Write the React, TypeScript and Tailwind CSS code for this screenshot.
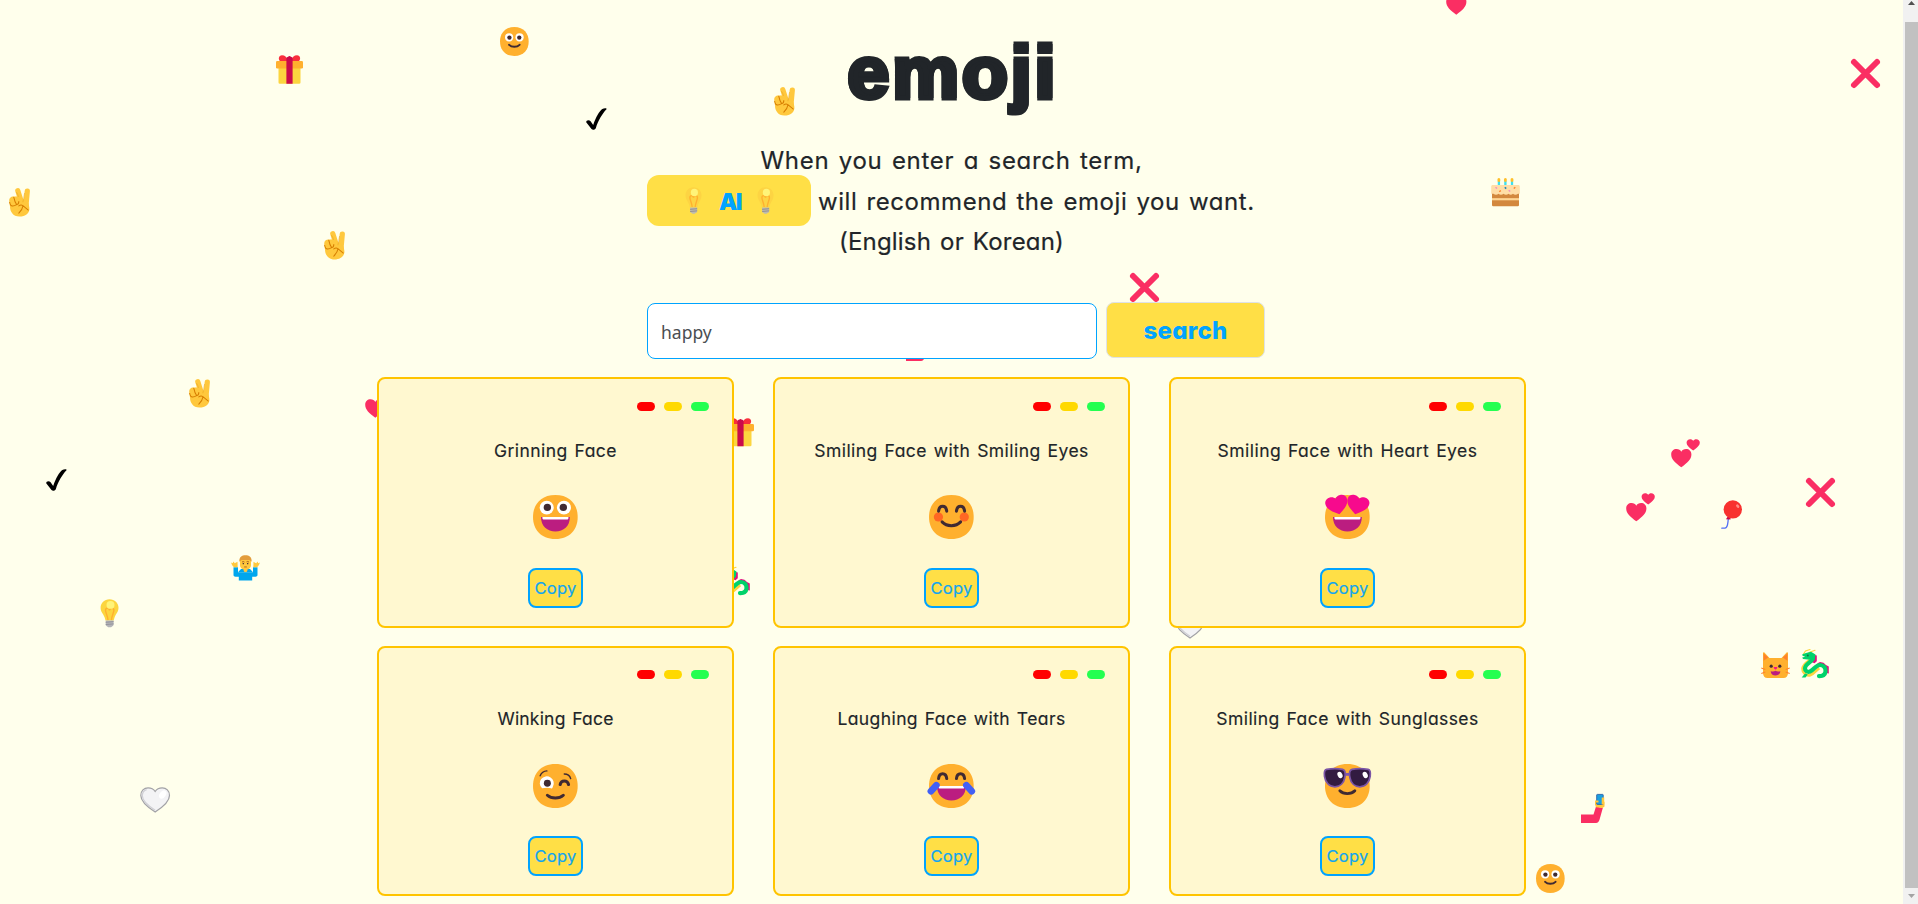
import { type ReactNode } from "react";

const INK = "#402A32";

function FaceBase() {
  return (
    <path
      d="M16 30C25.3 30 30 23.7 30 16S25.3 2 16 2 2 8.3 2 16s4.700 14 14 14Z"
      fill="#FFB02E"
    />
  );
}

function OpenMouth() {
  return (
    <>
      <path d="M7 16h18.100c0 6-4 9.200-9.050 9.200S7 22 7 16Z" fill="#BB1D80" />
      <path d="M7.900 16h16.300v.6c0 .6-.4 1-1 1H8.900c-.6 0-1-.4-1-1Z" fill="#fff" />
    </>
  );
}

function HappyEyes({ y }: { y: number }) {
  return (
    <path
      d={`M8 ${y}c.4-4.200 4.700-4.200 5.100 0M19.200 ${y}c.4-4.200 4.700-4.200 5.100 0`}
      fill="none"
      stroke={INK}
      strokeWidth="1.900"
      strokeLinecap="round"
    />
  );
}

const HEART = "M10 18.500C4 14 0 10.500 0 5.500 0 2 2.400 0 5.300 0 7.400 0 9.200 1 10 2.600 10.800 1 12.600 0 14.700 0 17.600 0 20 2 20 5.500c0 5-4 8.500-10 13Z";

const ART: Record<string, { box: string; art: ReactNode }> = {
  grinning: {
    box: "2 2 28 28",
    art: (
      <>
        <FaceBase />
        <circle cx="10.600" cy="10" r="4.400" fill="#fff" />
        <circle cx="21.400" cy="10" r="4.400" fill="#fff" />
        <circle cx="11" cy="9.900" r="2.300" fill={INK} />
        <circle cx="21" cy="9.900" r="2.300" fill={INK} />
        <OpenMouth />
      </>
    ),
  },
  smiling: {
    box: "2 2 28 28",
    art: (
      <>
        <FaceBase />
        <circle cx="7.900" cy="16" r="2.900" fill="#FF6723" />
        <circle cx="24.100" cy="16" r="2.900" fill="#FF6723" />
        <HappyEyes y={12.3} />
        <path d="M10.200 19.100c3 3.200 8.600 3.200 11.600 0" fill="none" stroke={INK} strokeWidth="1.900" strokeLinecap="round" />
      </>
    ),
  },
  heartEyes: {
    box: "2 2 28 28",
    art: (
      <>
        <FaceBase />
        <g fill="#F70A8D">
          <path d={HEART} transform="translate(1.400 4.500) rotate(-14) scale(.7 .64)" />
          <path d={HEART} transform="translate(17 1.100) rotate(14) scale(.7 .64)" />
        </g>
        <OpenMouth />
      </>
    ),
  },
  winking: {
    box: "2 2 28 28",
    art: (
      <>
        <FaceBase />
        <path d="M7.700 17.500a4.400 4.400 0 1 1 6.800-1.200c-.2.900-.8 1.600-1.100 1.200-1.500-.6-3.800-.5-5.700 0Z" fill="#fff" />
        <circle cx="11" cy="14.200" r="2.200" fill={INK} />
        <g fill="none" stroke={INK} strokeLinecap="round">
          <path d="M6.500 9.500c.7-1.700 2.200-3 4.200-3.100M21.600 8.400c1.900 0 3.500 1.200 4 2.900" strokeWidth=".9" />
          <path d="M19 15.100c.6-3 4.600-3 5.300 0" strokeWidth="1.900" />
          <path d="M11 21.900c2.600 2.400 7.400 2.400 10 0" strokeWidth="1.900" />
        </g>
      </>
    ),
  },
  laughing: {
    box: "2 2 28 28",
    art: (
      <>
        <FaceBase />
        <HappyEyes y={11.3} />
        <OpenMouth />
        <path d="M6.600 15.500 3.200 19.300M25.400 15.500l3.400 3.800" stroke="#4260F5" strokeWidth="4.200" strokeLinecap="round" />
      </>
    ),
  },
  sunglasses: {
    box: "2 2 28 28",
    art: (
      <>
        <FaceBase />
        <path d="M13.600 8.600h4.800" stroke="#8157AE" strokeWidth="1.800" />
        <g fill="#321B41" stroke="#7B55A5" strokeWidth="1.100">
          <path d="M3 5.400c3-.5 7.500-.5 10 0 1.700.4 1.900 2.600 1.400 5.200-.6 3.500-3 5.900-6.200 5.900-3.600 0-6-2.900-6.500-6.600-.3-2.200-.4-4.100 1.300-4.500Z" />
          <path d="M29 5.400c-3-.5-7.500-.5-10 0-1.700.4-1.900 2.600-1.400 5.200.6 3.500 3 5.900 6.200 5.900 3.600 0 6-2.900 6.500-6.600.3-2.200.4-4.100-1.300-4.500Z" />
        </g>
        <g fill="#fff">
          <ellipse cx="11.400" cy="9" rx="1.500" ry="2.100" transform="rotate(-25 11.400 9)" />
          <ellipse cx="27.200" cy="9" rx="1.500" ry="2.100" transform="rotate(-25 27.200 9)" />
        </g>
        <path d="M11.300 19c2.300 2.400 7.100 2.400 9.400 0" fill="none" stroke={INK} strokeWidth="1.800" strokeLinecap="round" />
      </>
    ),
  },
  face: {
    box: "2 2 28 28",
    art: (
      <>
        <FaceBase />
        <circle cx="10.900" cy="12" r="4" fill="#fff" />
        <circle cx="21.100" cy="12" r="4" fill="#fff" />
        <circle cx="11.200" cy="12.200" r="2.100" fill={INK} />
        <circle cx="20.800" cy="12.200" r="2.100" fill={INK} />
        <path d="M10.900 19.200c2.500 2.600 7.700 2.600 10.200 0" fill="none" stroke={INK} strokeWidth="1.900" strokeLinecap="round" />
      </>
    ),
  },
  gift: {
    box: "0 0 27 29",
    art: (
      <>
        <path d="M11 6.500H4.500C1.800 5 2.500.3 6 .3c3 0 4.500 2 5.500 4ZM16 6.500h6.500c2.700-1.500 2-6.200-1.500-6.200-3 0-4.500 2-5.500 4Z" fill="#F92F3C" />
        <path d="M2.500 12h22v15.500a1.300 1.300 0 0 1-1.300 1.300H3.800a1.300 1.300 0 0 1-1.300-1.300Z" fill="#FCD53F" />
        <rect y="6" width="27" height="7.500" rx="1.300" fill="#FFB02E" />
        <path d="M10.400 3.500c0-1 1-1.700 1.700-1.700.8-1 2-1 2.800 0 .8 0 1.700.7 1.700 1.700v25.300h-6.200Z" fill="#CA0B4A" />
      </>
    ),
  },
  check: {
    box: "0 0 21 22",
    art: (
      <path d="M.2 14.300C0 12 3.200 11.300 4.600 13.300L7.200 17C10 9 13 3.500 16.300 1 18-.2 21.300-.2 20.500 1.300 16 6 12 13 9.900 20c-.7 2-3.400 2.300-4.400 1Z" fill="#000" />
    ),
  },
  hand: {
    box: "0 0 62 84",
    art: (
      <>
        <path d="M26 8 35 36M54 9 50 52" stroke="#FFC83D" strokeWidth="15.500" strokeLinecap="round" />
        <path d="M1 40C-1 30 6 24 15 25l16-1 27 22 2 12c2 16-12 26-29 26C11 84 3 68 3 55Z" fill="#FFC83D" />
        <g fill="none" stroke="#D67D00" strokeWidth="3" strokeLinecap="round">
          <path d="M14 27q3 14 8 21M2 42q2 12 9 11 6 0 11-4 7 0 7-9" />
          <path d="M29 53q6-5 12-1l16 13M41 53q-1 10-12 21" />
        </g>
        <path d="M22 12q5 8 6 14M46 15l-5 27" fill="none" stroke="#E39D1A" strokeWidth="1.500" />
      </>
    ),
  },
  hearts: {
    box: "0 0 29 29",
    art: (
      <g fill="#FA2E63">
        <path d={HEART} transform="translate(.2 10.300) scale(1.010 1)" />
        <path d={HEART} transform="translate(15.600 .2) scale(.66 .62)" />
      </g>
    ),
  },
  cross: {
    box: "0 0 29 29",
    art: <path d="m3 3 23 23M26 3 3 26" stroke="#FA2E63" strokeWidth="6" strokeLinecap="round" />,
  },
  bulb: {
    box: "0 0 19 29",
    art: (
      <>
        <path d="M9.500.2C14.700.2 18.500 4 18.500 9c0 4.200-2.600 6.300-3.800 9.400-.5 1.400-.6 2.200-1 3.600H5.500c-.3-1.400-.5-2.200-1-3.600C3.300 15.300.6 13.200.6 9 .6 4 4.400.2 9.500.2Z" fill="#FCD53F" />
        <path d="M8 21.500C7.700 17 5.500 14 5.500 11.500c0-3 3.500-3 4 0 .6-3 4.400-3 4.400 0 0 2.500-2.200 5.500-2.500 10" fill="none" stroke="#FFB02E" strokeWidth="1.400" />
        <circle cx="10.500" cy="6" r="4" fill="#FFF478" />
        <path d="M5.700 22h7.900v4c0 1.200-1 1.700-1.700 1.900-.8 1.200-3.700 1.200-4.500 0-.8-.2-1.700-.7-1.700-1.900Z" fill="#B4B4B8" />
        <path d="m5.700 23.700 7.900-.7m-7.900 3 7.900-.7" stroke="#8B8B93" strokeWidth=".8" />
      </>
    ),
  },
  badgeBulb: {
    box: "0 0 19 29",
    art: (
      <>
        <path d="M9.500.2C14.700.2 18.500 4 18.500 9c0 4.200-2.600 6.300-3.800 9.400-.5 1.400-.6 2.200-1 3.600H5.500c-.3-1.400-.5-2.200-1-3.600C3.300 15.300.6 13.200.6 9 .6 4 4.400.2 9.500.2Z" fill="#FDD443" />
        <path d="M8 21.500C7.700 17 5.500 14 5.500 11.500c0-3 3.500-3 4 0 .6-3 4.400-3 4.400 0 0 2.500-2.200 5.500-2.500 10" fill="none" stroke="#FFB02E" strokeWidth="1.500" />
        <circle cx="10.500" cy="6" r="4" fill="#FFF478" />
        <path d="M5.700 22h7.900v4c0 1.200-1 1.700-1.700 1.900-.8 1.200-3.700 1.200-4.500 0-.8-.2-1.700-.7-1.700-1.900Z" fill="#BDBBB0" />
        <path d="m5.700 24 7.900-.7m-7.900 3 7.900-.7" stroke="#8F8C8A" strokeWidth="1" />
      </>
    ),
  },
  shrug: {
    box: "0 0 29 26",
    art: (
      <>
        <path d="M2.500 12.500h4.500v5.200h15v-5.200h4.500v8c0 1-1 1.700-2 1.700h-3.300V26H7.800v-3.800H4.500c-1.200 0-2-.7-2-1.700Z" fill="#00A6ED" />
        <path d="M10 14.200c2.500 0 6.500 0 9 0l3 3.500H7Z" fill="#00A6ED" />
        <path d="M3 12.400C1.500 11 .3 9.300.2 7.600l1.500.8.900-1.700 1.100 1.800L6.500 7l.2 5.400ZM26 12.400c1.500-1.400 2.700-3.100 2.800-4.800l-1.500.8-.9-1.700-1.100 1.800L22.500 7l-.2 5.400Z" fill="#FFC83D" />
        <path d="M9 5h11v5.500c0 2.200-1.700 3.800-3.600 4.300v.7a1.900 1.900 0 0 1-3.800 0v-.7C10.700 14.300 9 12.700 9 10.500Z" fill="#FFC83D" />
        <path d="M8.400 6.800C7.900 1.800 11 .2 14.500.2s6.600 1.600 6.100 6.600L18.500 5h-8Z" fill="#E39D3B" />
        <path d="M11 7.200q1.200-1 2.500 0m2-.2q1.300-.8 2.500.2m-4.800 5h2.600" stroke="#9A4F1C" strokeWidth=".8" fill="none" />
        <path d="M11.700 8.800h1.200m3.200 0h1.200" stroke={INK} strokeWidth="1.200" />
      </>
    ),
  },
  whiteHeart: {
    box: "0 0 30 26",
    art: (
      <>
        <path d="M15 25C8 20.500.8 15.200.8 8.500.8 3.800 4 .9 8 .9c3 0 5.600 1.400 7 3.600C16.400 2.300 19 .9 22 .9c4 0 7.200 2.900 7.200 7.600C29.200 15.200 22 20.500 15 25Z" fill="#F3F3F5" stroke="#A2A2A6" strokeWidth="1.200" />
        <path d="M15 23.200C8 18.700 2.400 14.300 2.300 8.800c0-3.500 2.100-5.500 4.200-6.200" fill="none" stroke="#CFCFD4" strokeWidth="1.200" />
        <ellipse cx="22.500" cy="7.500" rx="3" ry="4.600" fill="#fff" transform="rotate(35 22.500 7.500)" />
      </>
    ),
  },
  cake: {
    box: "0 0 29 29",
    art: (
      <>
        <path d="M7.900 3v5m6.500-5v5M21 3v5" stroke="#3EE0EE" strokeWidth="2.300" />
        <g fill="#FFBF28">
          <ellipse cx="7.900" cy="2.100" rx="1.500" ry="2" />
          <ellipse cx="14.400" cy="2.100" rx="1.500" ry="2" />
          <ellipse cx="21" cy="2.100" rx="1.500" ry="2" />
        </g>
        <rect x="1" y="13" width="27" height="15.800" rx="1.200" fill="#D3883E" />
        <path d="M1 20.500h27v2.200H1Z" fill="#FFD695" />
        <path d="M1.800 7.200h25.400c1 0 1.600.6 1.600 1.600V16H27c-1.500 1.300-3.800 1.300-5 0-1.600 1.500-3 1.500-4.500 0-1.500 1.300-3.500 1.300-5 0-1.500 1.500-3.500 1.500-5 0-1.500 1.300-3.500 1.300-5 0H.2V8.800c0-1 .6-1.600 1.600-1.600Z" fill="#FFDEA7" />
        <path d="M4.500 9.400 6 10.700m11.700 1.800 1.500 1.300" stroke="#F08FC0" strokeWidth="1.500" />
        <path d="m8.300 14 1.500-1.300m13-2 1.500-1.300" stroke="#FF822D" strokeWidth="1.500" />
        <path d="m13.800 9.400 1.400 1.400" stroke="#2288B8" strokeWidth="1.600" />
      </>
    ),
  },
  balloon: {
    box: "0 0 21 29",
    art: (
      <>
        <path d="M7.300 19c-.6 4-.2 8.700-3.300 9.200H.8" fill="none" stroke="#5470F5" strokeWidth="1.300" strokeLinecap="round" />
        <path d="M6.500 16.800h2.800l.3 2.600-4.600-.2Z" fill="#CA0B4A" />
        <circle cx="11.800" cy="9.400" r="9.200" fill="#F8312F" />
        <ellipse cx="16.700" cy="6.200" rx="1.300" ry="2" fill="#FF8E86" transform="rotate(-40 16.700 6.200)" />
      </>
    ),
  },
  cat: {
    box: "0 0 29 26",
    art: (
      <>
        <path d="M2 1.200C2 .2 3 0 3.600.8L8.500 6h12L25.400.8c.6-.8 1.600-.6 1.600.4V21c0 3-1.800 5-4.500 5H6.500C3.800 26 2 24 2 21Z" fill="#FFB02E" />
        <path d="M2.600 1.500v7.200L7.300 5.600ZM26.400 1.500v7.200l-4.700-3.100Z" fill="#FF822D" />
        <path d="m.3 16 4 1.500M.3 21.500l4-1.400m24.400-4.100-4 1.500m4 4-4-1.400" stroke="#FF822D" strokeWidth="1.100" />
        <circle cx="10.200" cy="14.200" r="1.600" fill={INK} />
        <circle cx="18.800" cy="14.200" r="1.600" fill={INK} />
        <path d="M13 15.600h3l-1.500 1.700Z" fill="#F70A8D" stroke="#F70A8D" strokeLinejoin="round" />
        <path d="M9.700 19.200c2 .6 3.500.4 4.800-.4 1.300.8 2.800 1 4.800.4 0 2.800-2.200 4.400-4.800 4.400s-4.800-1.600-4.800-4.400Z" fill="#BB1D80" />
      </>
    ),
  },
  dragon: {
    box: "0 0 28 29",
    art: (
      <>
        <path d="M2.500 5 4.500 2 9 .5M8 3.500l6-2.200" fill="none" stroke="#FCD53F" strokeWidth="1.200" strokeLinecap="round" />
        <path d="M12 5.500l3.800 1v5.700l-2.300 2-2.500-1ZM16 14.500l3-1.500 3.500.8 2.500 2.200 2.800 1.600v7l-2.800-.5-4-7Z" fill="#E0127F" />
        <path d="M9 11C5.500 13.500 1.700 15.500 1.700 20c0 4 3.500 7 7.500 6 4-1.200 6-5 9-7" fill="none" stroke="#FCD53F" strokeWidth="3" />
        <path d="M12 8.500c0 4.500-8 6-8 11 0 2.500 2.500 4 5 3 4-1.500 5.500-6.500 10-6.500 3.500 0 6 3 5.500 6.500-.4 3-3 4.700-6.500 4.600" fill="none" stroke="#00D26A" strokeWidth="4.200" strokeLinecap="round" />
        <path d="M1.300 5.200 5 4l5-1.200 4.500 2.700-.8 5-4.700.3-7-.8-.8-1.500 3-.8-2.700-.9ZM.7 28.500 4 24.500l2.800 1-2.300 3Z" fill="#00D26A" />
        <circle cx="6.800" cy="6.500" r="1" fill="#1B6B45" />
      </>
    ),
  },
  selfie: {
    box: "0 0 24 29",
    art: (
      <>
        <path d="M0 20.500h12.500l2.500-8 6.800 1.500-3.300 11.800c-.6 2-1.500 3.200-3.500 3.200H0Z" fill="#FA2E63" />
        <path d="M14 7h8.500l1 1v4.500l-2 1.500-6.500-.8-1-3Z" fill="#FFC83D" />
        <rect x="15.700" y=".4" width="6.500" height="10" rx=".6" fill="#1AA0E0" stroke="#2B62A8" strokeWidth=".9" />
        <path d="M20.700 3.500h2.500v7h-2.500ZM14 6.500h3.500v2H14Z" fill="#FFC83D" />
      </>
    ),
  },
};

function Emoji({ name, w, h, className = "" }: { name: string; w: number; h: number; className?: string }) {
  const { box, art } = ART[name];
  return (
    <svg width={w} height={h} viewBox={box} preserveAspectRatio="none" className={`block shrink-0 overflow-visible ${className}`} aria-hidden="true">
      {art}
    </svg>
  );
}

/* name, left, top, width, height */
const SCATTER: [string, number, number, number, number][] = [
  ["face", 500.3, 27, 28.7, 29],
  ["gift", 276, 55, 27, 29],
  ["check", 586, 107.5, 21, 22],
  ["hand", 9, 188, 21, 28.5],
  ["hand", 324, 231, 21, 28.5],
  ["hand", 773.5, 86.5, 21, 28.5],
  ["hand", 189, 379, 21, 28.5],
  ["hearts", 365, 388.5, 29, 29],
  ["check", 46, 469, 21, 22],
  ["shrug", 230.5, 555, 29, 25.500],
  ["bulb", 100, 599, 19, 28.5],
  ["whiteHeart", 139.7, 787, 30.3, 26],
  ["hearts", 1445.5, -14.500, 29, 29],
  ["cross", 1850.700, 58.700, 29, 29],
  ["cake", 1490.700, 178, 29, 28.5],
  ["cross", 1130, 273, 29, 29],
  ["selfie", 906, 332, 24, 29],
  ["gift", 727, 417.5, 27, 28.5],
  ["dragon", 721.5, 566, 28, 29],
  ["whiteHeart", 1175, 612.5, 30, 26],
  ["hearts", 1670.5, 438.5, 29, 28.5],
  ["hearts", 1625.5, 492.5, 29, 28.5],
  ["balloon", 1720.5, 500, 21, 29],
  ["cross", 1805.5, 477.7, 29, 29],
  ["cat", 1760.5, 652, 29, 26],
  ["dragon", 1801.3, 649, 28, 29],
  ["selfie", 1580.5, 794, 24, 29],
  ["face", 1535.5, 864, 28.7, 29],
];

const CARDS = [
  { title: "Grinning Face", icon: "grinning", tracking: "tracking-[0.45px]" },
  { title: "Smiling Face with Smiling Eyes", icon: "smiling", tracking: "tracking-[0.45px]" },
  { title: "Smiling Face with Heart Eyes", icon: "heartEyes", tracking: "tracking-[0.45px]" },
  { title: "Winking Face", icon: "winking", tracking: "tracking-[0.2px]" },
  { title: "Laughing Face with Tears", icon: "laughing", tracking: "tracking-[0.4px]" },
  { title: "Smiling Face with Sunglasses", icon: "sunglasses", tracking: "tracking-[0.43px]" },
];

function Card({ title, icon, tracking }: { title: string; icon: string; tracking: string }) {
  return (
    <article className="flex h-[250.6px] flex-col items-center rounded-lg border-2 border-[#ffc400] bg-[#fff8d0] px-[23px] pt-[22.8px]">
      <div className="flex gap-[9px] self-end">
        <span className="h-[9px] w-[18px] rounded-full bg-[#ff0000]" />
        <span className="h-[9px] w-[18px] rounded-full bg-[#ffd900]" />
        <span className="h-[9px] w-[18px] rounded-full bg-[#24ff50]" />
      </div>
      <h2 className={`mt-[27.9px] whitespace-nowrap text-[17.5px] leading-[24px] [-webkit-text-stroke:0.15px] [word-spacing:1.5px] ${tracking}`}>{title}</h2>
      <Emoji name={icon} w={44.7} h={44} className="mt-[32.3px]" />
      <button className="mt-[28.7px] flex h-10 w-[55px] items-center justify-center rounded-lg border-2 border-[#00a3ff] bg-[#ffdf46] pt-px text-[16.500px] tracking-[0.2px] text-[#12a5ee] [-webkit-text-stroke:0.2px]">
        Copy
      </button>
    </article>
  );
}

export default function App() {
  return (
    <div className="flex h-[904px] w-[1918px] overflow-hidden bg-[#ffffec] font-['Inter',sans-serif] text-[#212529] [font-feature-settings:'cv11']">
      <main className="relative isolate h-full w-[1903px] overflow-hidden">
        {SCATTER.map(([name, left, top, w, h], i) => (
          <span key={i} className="absolute -z-10" style={{ left, top }}>
            <Emoji name={name} w={w} h={h} />
          </span>
        ))}

        <header className="flex flex-col items-center">
          <h1 className="mt-[24px] h-[116px] pl-[3px] font-['Liberation_Sans',sans-serif] text-[75px] font-bold leading-[96px] tracking-[3px] [-webkit-text-stroke:5px_#212529] [text-shadow:2.5px_0_#212529,-2.5px_0_#212529]">
            emoji
          </h1>
          <p className="mt-px whitespace-nowrap text-[24px] leading-[40px] tracking-[0.7px] [-webkit-text-stroke:0.2px] [word-spacing:2px]">When you enter a search term,</p>
          <div className="flex h-[41px] w-[609px] items-center whitespace-nowrap">
            <span className="-mb-[4.5px] -mt-[6.5px] flex h-[51px] w-[164px] items-center rounded-xl bg-[#ffdf46] pl-[38px]">
              <Emoji name="badgeBulb" w={17} h={27} />
              <span className="ml-[17px] w-[22px] pt-[3px] text-[23px] font-black tracking-[-1.5px] text-[#00a3ff]">AI</span>
              <Emoji name="badgeBulb" w={17} h={27} className="ml-[16px]" />
            </span>
            <span className="ml-[7px] text-[24px] leading-[40px] tracking-[0.55px] [-webkit-text-stroke:0.2px] [word-spacing:2px]">will recommend the emoji you want.</span>
          </div>
          <p className="whitespace-nowrap text-[24px] leading-[40px] tracking-[0.2px] [-webkit-text-stroke:0.2px] [word-spacing:2px]">(English or Korean)</p>
        </header>

        <form className="mt-[40px] flex pl-[647px]">
          <input
            defaultValue="happy"
            className="mt-px h-[56px] w-[450px] rounded-lg border border-[#00a3ff] bg-white px-[13px] pt-[2px] font-['Noto_Sans',sans-serif] text-[17.500px] text-[#4a4e52] outline-none"
          />
          <button type="button" className="ml-[9px] h-[56px] w-[159px] rounded-lg border border-[#dee2e6] bg-[#ffdf46] pt-[2px] text-[24px] font-extrabold tracking-[0.3px] text-[#00a3ff]">
            search
          </button>
        </form>

        <section className="mt-[18px] grid grid-cols-[357px_357px_357px] justify-center gap-x-[39px] gap-y-[18px]">
          {CARDS.map((c) => (
            <Card key={c.title} {...c} />
          ))}
        </section>
      </main>

      <aside className="flex w-[15px] flex-col bg-[#f1f1f1]">
        <svg width="15" height="22" viewBox="0 0 15 22"><path d="M5 5h7L8.500 1Z" fill="#505050" /></svg>
        <div className="ml-[2px] h-[866px] bg-[#c1c1c1]" />
        <svg width="15" height="16" viewBox="0 0 15 16"><path d="M5 6h7l-3.500 4Z" fill="#a3a3a3" /></svg>
      </aside>
    </div>
  );
}
